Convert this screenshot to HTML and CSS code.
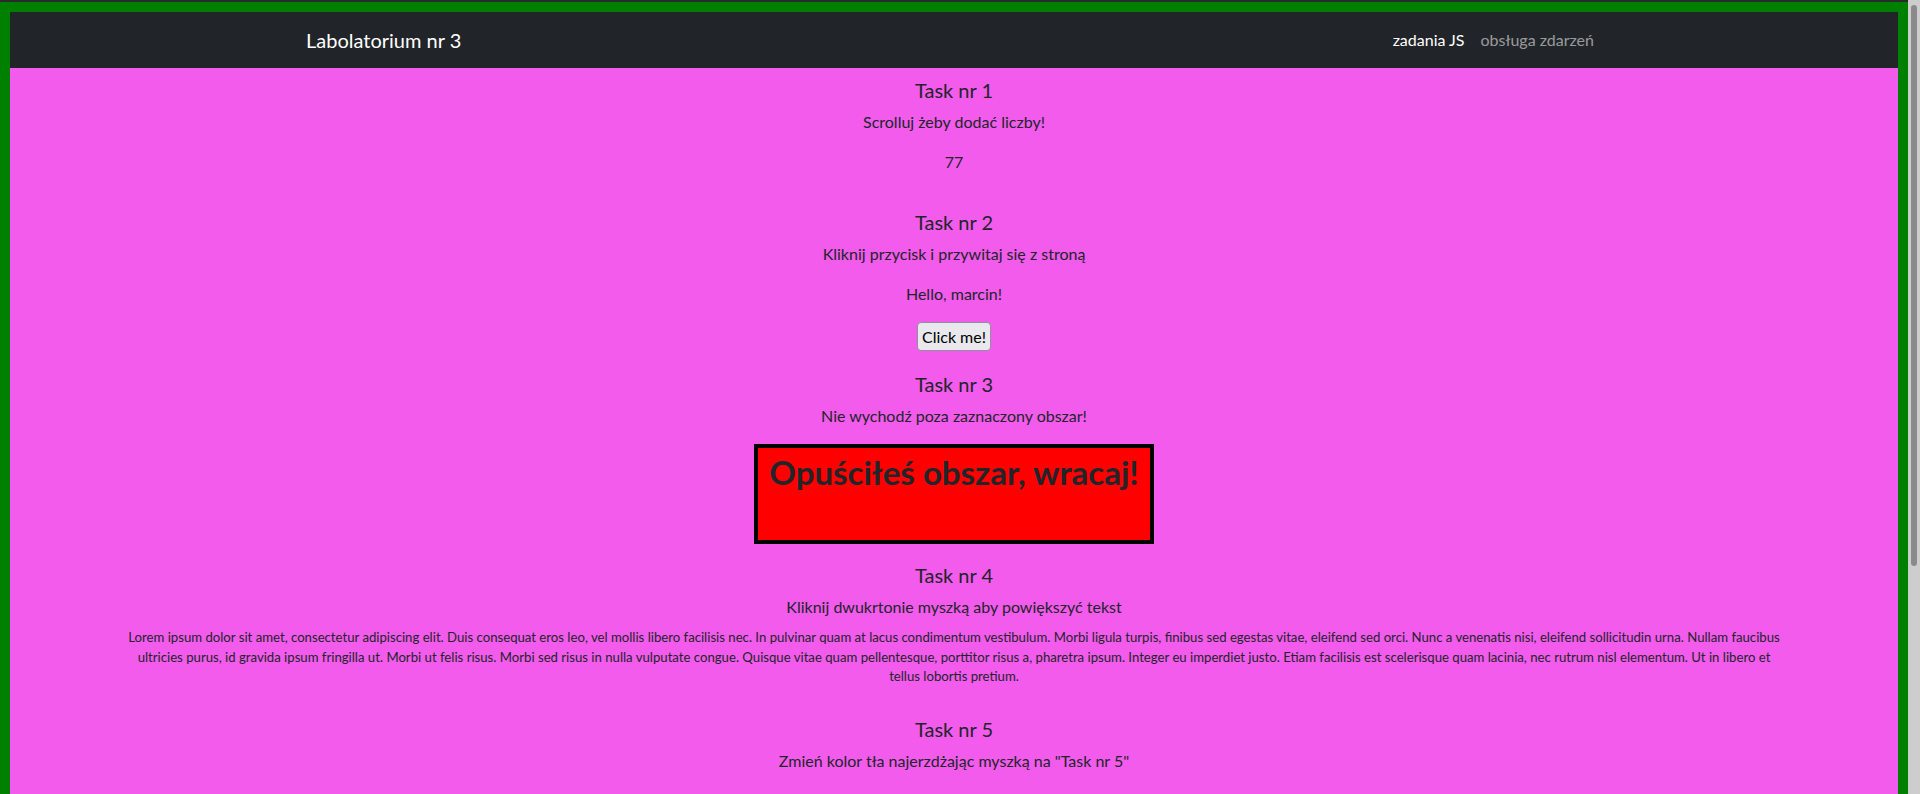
FILE: index.html
```html
<!DOCTYPE html>
<html lang="pl">
<head>
<meta charset="utf-8">
<title>Labolatorium nr 3</title>
<link rel="stylesheet" href="styles.css">
</head>
<body>
<nav class="navbar">
  <div class="container">
    <a class="brand" href="#">Labolatorium nr 3</a>
    <ul class="nav">
      <li><a class="nav-link active" href="#">zadania JS</a></li>
      <li><a class="nav-link" href="#">obsługa zdarzeń</a></li>
    </ul>
  </div>
</nav>
<main class="tasks">
  <section class="task task-1">
    <h5 class="task-title">Task nr 1</h5>
    <p class="task-text">Scrolluj żeby dodać liczby!</p>
    <p class="task-text">77</p>
  </section>
  <section class="task task-2">
    <h5 class="task-title">Task nr 2</h5>
    <p class="task-text">Kliknij przycisk i przywitaj się z stroną</p>
    <p class="task-text">Hello, marcin!</p>
    <button class="btn" type="button">Click me!</button>
  </section>
  <section class="task task-3">
    <h5 class="task-title">Task nr 3</h5>
    <p class="task-text">Nie wychodź poza zaznaczony obszar!</p>
    <div class="zone"><h2 class="zone-text">Opuściłeś obszar, wracaj!</h2></div>
  </section>
  <section class="task task-4">
    <h5 class="task-title">Task nr 4</h5>
    <p class="task-text task-text-short">Kliknij dwukrtonie myszką aby powiększyć tekst</p>
    <p class="lorem">Lorem ipsum dolor sit amet, consectetur adipiscing elit. Duis consequat eros leo, vel mollis libero facilisis nec. In pulvinar quam at lacus condimentum vestibulum. Morbi ligula turpis, finibus sed egestas vitae, eleifend sed orci. Nunc a venenatis nisi, eleifend sollicitudin urna. Nullam faucibus ultricies purus, id gravida ipsum fringilla ut. Morbi ut felis risus. Morbi sed risus in nulla vulputate congue. Quisque vitae quam pellentesque, porttitor risus a, pharetra ipsum. Integer eu imperdiet justo. Etiam facilisis est scelerisque quam lacinia, nec rutrum nisl elementum. Ut in libero et tellus lobortis pretium.</p>
  </section>
  <section class="task task-5">
    <h5 class="task-title">Task nr 5</h5>
    <p class="task-text">Zmień kolor tła najerzdżając myszką na "Task nr 5"</p>
  </section>
</main>
<div class="scrollbar" aria-hidden="true"><div class="scrollbar-thumb"></div></div>
</body>
</html>
```
FILE: styles.css
```css
* { box-sizing: border-box; }

html {
  background: #2b2b2b;
}

body {
  margin: 2px 12px 0 0;
  border: 10px solid #008000;
  background: #f35bed;
  color: #212529;
  font-family: Lato, "Liberation Sans", sans-serif;
  font-size: 16px;
  line-height: 1.5;
  min-height: 1118px;
}

/* window scrollbar (drawn) */
.scrollbar {
  position: fixed;
  top: 0;
  right: 0;
  width: 12px;
  height: 100vh;
  background: #cdcdcd;
}
.scrollbar-thumb {
  position: absolute;
  top: 5px;
  left: 3px;
  width: 6px;
  height: 561px;
  background: #8a8a8a;
  border-radius: 3px;
}

/* navbar */
.navbar {
  background: #212529;
  padding: 8px 0;
}
.container {
  max-width: 1320px;
  margin: 0 auto;
  padding: 0 12px;
  display: flex;
  align-items: center;
  justify-content: space-between;
}
.brand {
  color: #fff;
  font-size: 20px;
  line-height: 30px;
  padding: 5px 0;
  text-decoration: none;
}
.nav {
  display: flex;
  list-style: none;
  margin: 0;
  padding: 0;
}
.nav-link {
  display: block;
  padding: 8px;
  line-height: 24px;
  color: rgba(255, 255, 255, 0.55);
  text-decoration: none;
}
.nav-link.active { color: #fff; }

/* tasks */
.tasks {
  display: flex;
  flex-direction: column;
  text-align: center;
}
.task { display: flow-root; }
.task-1 { margin-top: 10px; }
.task-2 { margin-top: 20px; }
.task-3 { margin-top: 21px; }
.task-4 { margin-top: 19px; }
.task-5 { margin-top: 14px; }

.task-title {
  margin: 0 0 8px;
  font-size: 20px;
  font-weight: 400;
  line-height: 24px;
}
.task-text {
  margin: 0 0 16px;
}
.task-text-short { margin-bottom: 9px; }

.btn {
  display: block;
  margin: 0 auto;
  height: 29px;
  padding: 0 4px;
  font-family: Lato, "Liberation Sans", sans-serif;
  font-size: 16px;
  color: #000;
  background: #e9e9ed;
  border: 1px solid #8f8f9d;
  border-radius: 4px;
}

.zone {
  width: 400px;
  height: 100px;
  margin: 0 auto;
  background: #ff0000;
  border: 4px solid #000;
  padding-top: 5px;
}
.zone-text {
  margin: 0;
  font-size: 33px;
  font-weight: 700;
  line-height: 1.2;
  white-space: nowrap;
}

.lorem {
  margin: 0 0 16px;
  padding: 0 114px;
  font-size: 13.17px;
  line-height: 19.5px;
}
```
